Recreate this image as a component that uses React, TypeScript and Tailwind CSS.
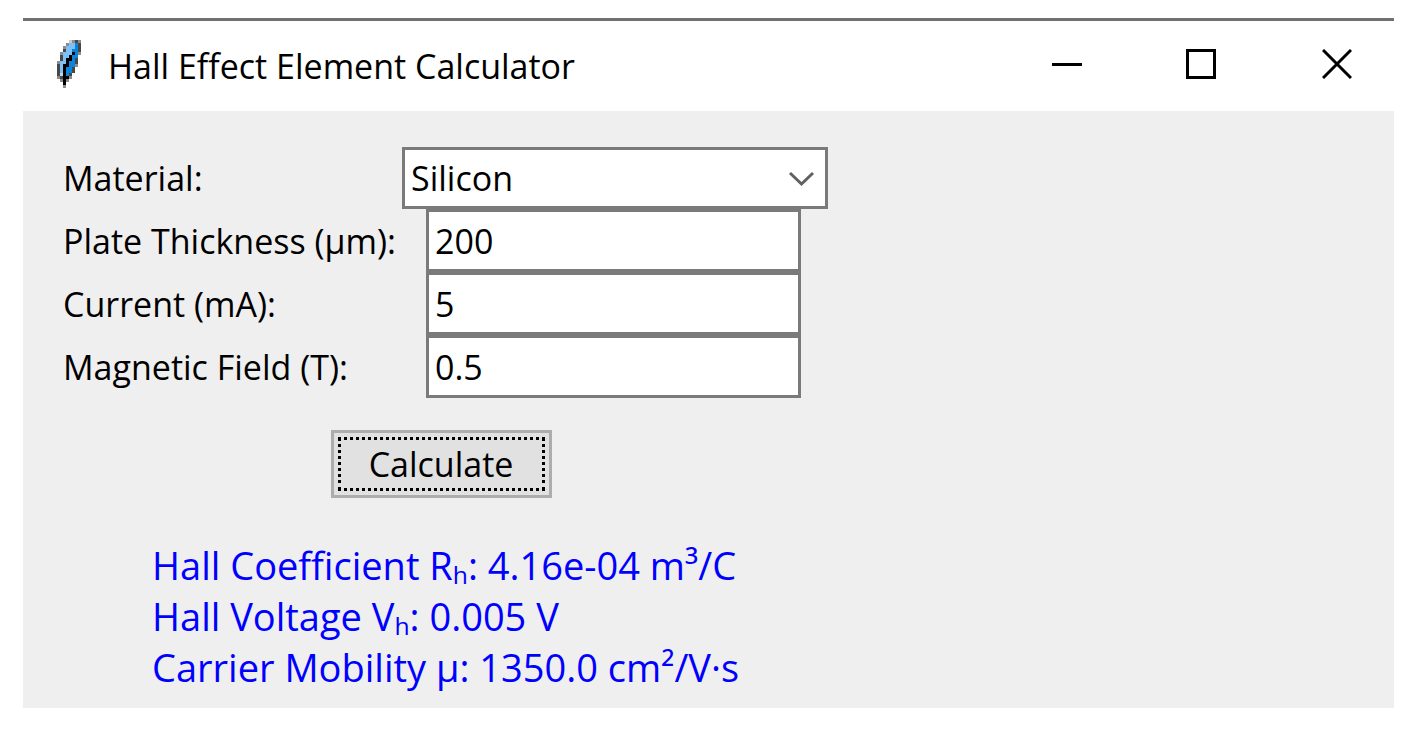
import React, { useState } from 'react';

const materials: Record<string, { rh: number, mobility: number }> = {
    Silicon: { rh: 4.16e-4, mobility: 1350 },
    Germanium: { rh: 2.5e-4, mobility: 3900 },
    GaAs: { rh: 1.1e-4, mobility: 8500 },
}

//Tk feather, one character per icon pixel
const featherRows = [
    '....lgdg',
    '...gbbBd',
    '..gbbbBd',
    '..dbbBBd',
    '.gbbbkBg',
    '.dbbkBB.',
    '.dbkkBd.',
    'gbbkBBd.',
    'dbkkBBg.',
    'dbkBBd..',
    'dbkBBd..',
    'dwkBd...',
    'gdkkg...',
    '.gkg....',
    '..k.....',
    '..g.....',
]

const featherColors: Record<string, string> = {
    l: '#c9c9c9',
    g: '#8c8c8c',
    d: '#484848',
    k: '#000000',
    w: '#c5d6e2',
    b: '#7cc0f5',
    B: '#0a83dc',
}

const Feather = () => (
    <svg className="h-12 w-6" viewBox="0 0 8 16" shapeRendering="crispEdges" aria-hidden="true">
        {featherRows.map((row, y) => [...row].map((c, x) => c !== '.' &&
            <rect key={`${x}-${y}`} x={x} y={y} width="1" height="1" fill={featherColors[c]} />))}
    </svg>
)

const TitleBar = () => (
    <header className="flex h-[90px] items-center bg-white pb-1 pl-[34px]">
        <Feather />
        <h1 className="ml-[27px] flex-1 pt-1 text-[34px] leading-[48px]">Hall Effect Element Calculator</h1>
        <div className="flex h-full items-center">
            <button type="button" aria-label="Minimize" className="flex h-full w-[134px] items-center justify-center">
                <svg className="size-[30px]" viewBox="0 0 30 30"><path d="M0 15.500H30" stroke="#000" strokeWidth="3" /></svg>
            </button>
            <button type="button" aria-label="Maximize" className="flex h-full w-[134px] items-center justify-center">
                <svg className="size-[30px]" viewBox="0 0 30 30"><path d="M1.5 1.5H28.5V28.5H1.5Z" fill="none" stroke="#000" strokeWidth="3" /></svg>
            </button>
            <button type="button" aria-label="Close" className="ml-3 flex h-full w-[114px] items-center justify-center">
                <svg className="size-[30px]" viewBox="0 0 30 30"><path d="M1 1L29 29M29 1L1 29" stroke="#000" strokeWidth="3" /></svg>
            </button>
        </div>
    </header>
)

const Field = ({ id, label, value, onChange }: { id: string, label: string, value: string, onChange: (v: string) => void }) => (
    <>
        <label htmlFor={id} className="whitespace-nowrap">{label}</label>
        <input id={id} type="text" value={value} onChange={e => onChange(e.target.value)}
            className="mr-[27px] ml-6 h-[63px] border-[3px] border-[#7a7a7a] bg-white px-[6px] outline-none" />
    </>
)

const compute = (material: string, thickness: string, current: string, field: string) => {
    const { rh, mobility } = materials[material]
    const t = Number(thickness) * 1e-6
    const voltage = (rh * Number(current) * 1e-3 * Number(field)) / t
    //exponent is padded to two digits
    const coefficient = rh.toExponential(2).replace(/e([+-])(\d)$/, 'e$10$2')
    return { coefficient, voltage: voltage.toFixed(3), mobility: mobility.toFixed(1) }
}

export default function App() {
    const [material, setMaterial] = useState('Silicon')
    const [thickness, setThickness] = useState('200')
    const [current, setCurrent] = useState('5')
    const [field, setField] = useState('0.5')
    const [result, setResult] = useState(compute('Silicon', '200', '5', '0.5'))

    return (
        <div className="bg-white pt-[18px] pr-[25px] pb-7 pl-[23px] font-['Open_Sans','Noto_Sans',sans-serif] text-[34px] leading-[48px] text-black">
            <div className="border-t-[3px] border-[#737071] bg-[#efefef]">
                <TitleBar />
                <main className="pt-9 pb-[15px] pl-10">
                    <form onSubmit={e => { e.preventDefault(); setResult(compute(material, thickness, current, field)) }}>
                        <div className="grid max-w-[765px] grid-cols-[1fr_426px] items-center">
                            <label htmlFor="material">Material:</label>
                            <div className="relative">
                                <select id="material" value={material} onChange={e => setMaterial(e.target.value)}
                                    className="block h-[62px] w-full appearance-none border-[3px] border-[#7a7a7a] bg-white px-[6px] outline-none">
                                    {Object.keys(materials).map(m => <option key={m}>{m}</option>)}
                                </select>
                                <svg className="pointer-events-none absolute top-6 right-3 h-4 w-7" viewBox="0 0 28 16" aria-hidden="true">
                                    <path d="M2 2L13.500 13L25 2" fill="none" stroke="#606060" strokeWidth="3" />
                                </svg>
                            </div>
                            <Field id="thickness" label="Plate Thickness (µm):" value={thickness} onChange={setThickness} />
                            <Field id="current" label="Current (mA):" value={current} onChange={setCurrent} />
                            <Field id="field" label="Magnetic Field (T):" value={field} onChange={setField} />
                        </div>
                        <div className="flex max-w-[756px] justify-center pt-8">
                            <button type="submit" className="h-[68px] w-[221px] border-[3px] border-[#adadad] bg-[#e1e1e1] p-1">
                                <span className="flex h-full items-center justify-center border-[3px] border-dotted border-black">Calculate</span>
                            </button>
                        </div>
                    </form>
                    <output className="mt-[42px] ml-[89px] block text-[38px] leading-[51px] text-[#0000ff]">
                        <p>Hall Coefficient Rₕ: {result.coefficient} m³/C</p>
                        <p>Hall Voltage Vₕ: {result.voltage} V</p>
                        <p>Carrier Mobility µ: {result.mobility} cm²/V·s</p>
                    </output>
                </main>
            </div>
        </div>
    )
}
